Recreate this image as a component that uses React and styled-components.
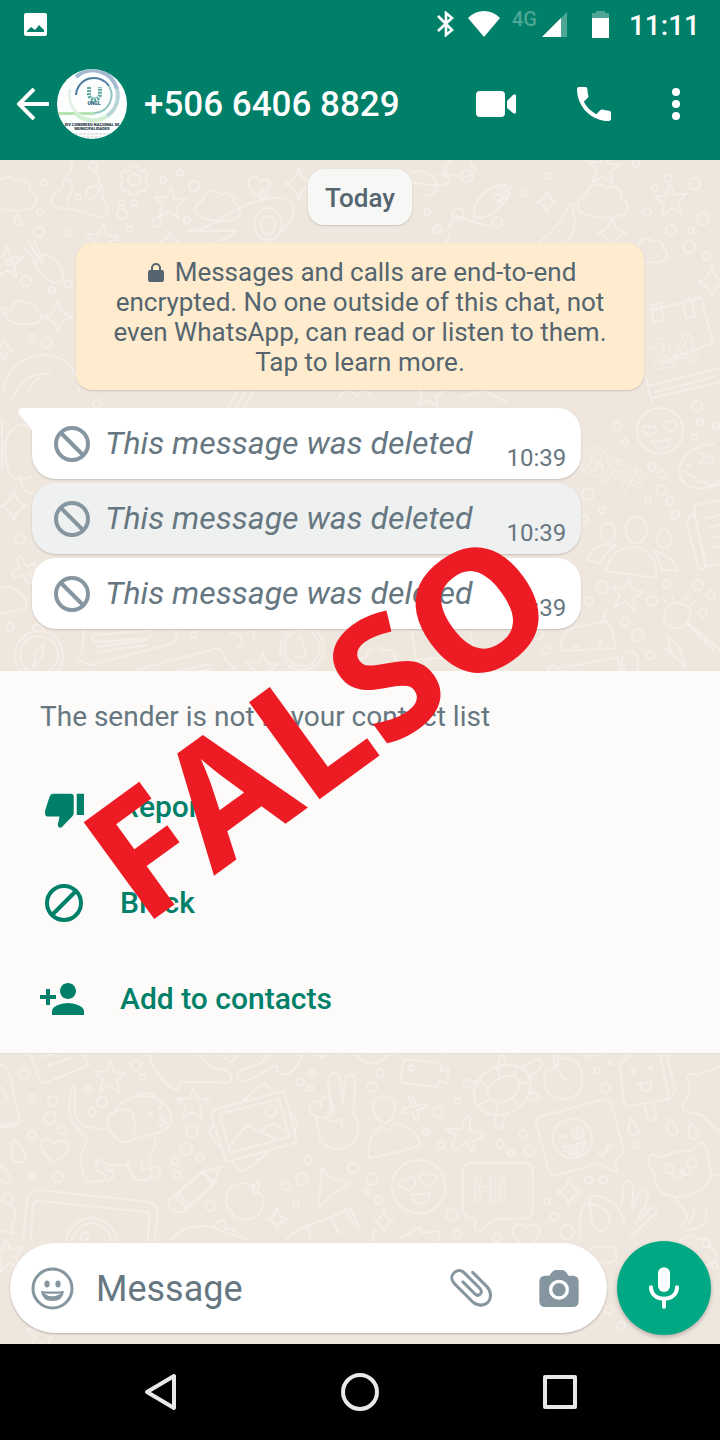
import React from 'react'
import styled, { createGlobalStyle } from 'styled-components'

const GlobalStyle = createGlobalStyle`
    * {
        box-sizing: border-box;
    }
    body {
        margin: 0;
        background-color: #000000;
        font-family: Roboto, "Liberation Sans", sans-serif;
    }
    button {
        padding: 0;
        border: none;
        background: none;
        color: inherit;
        font: inherit;
        cursor: pointer;
    }
`

const Screen = styled.div`
    position: relative;
    display: flex;
    flex-direction: column;
    min-height: 100vh;
    overflow: hidden;
`

const Icon = styled.svg`
    display: block;
    flex: none;
    width: ${props => props.$w}px;
    height: ${props => props.$h || props.$w}px;
    fill: ${props => props.$line ? 'none' : 'currentColor'};
    stroke: ${props => props.$line ? 'currentColor' : 'none'};
    stroke-width: ${props => props.$line || 0};
`

/* ---------- top ---------- */

const Header = styled.header`
    background-color: #008069;
    color: #ffffff;
`

const StatusBar = styled.div`
    display: flex;
    align-items: center;
    height: 48px;
    padding: 0 20px 0 24px;
`

const StatusIcons = styled.div`
    display: flex;
    align-items: center;
    margin-left: auto;
`

const Network = styled.div`
    display: flex;
    gap: 5px;
    margin: 0 25px 0 12px;
`

const NetworkType = styled.span`
    font-size: 20px;
    line-height: 16px;
    font-weight: 500;
    color: #4da696;
`

const Clock = styled.span`
    margin-left: 20px;
    padding-top: 3px;
    font-size: 28px;
    line-height: 32px;
    font-weight: 500;
`

const ChatBar = styled.div`
    display: flex;
    align-items: center;
    height: 112px;
    padding: 0 40px 0 17px;
`

const BackButton = styled.button`
    display: flex;
    align-items: center;
    gap: 8px;
`

const Contact = styled.h1`
    flex: 1;
    margin: 0 0 0 17px;
    padding-top: 2px;
    font-size: 35px;
    line-height: 44px;
    font-weight: 500;
    white-space: nowrap;
`

const ChatActions = styled.div`
    display: flex;
    align-items: center;
    gap: 61px;
`

/* ---------- chat ---------- */

const Chat = styled.main`
    position: relative;
    display: flex;
    flex: 1;
    flex-direction: column;
    background-color: #efe7de;
`

const Wallpaper = styled.svg`
    position: absolute;
    top: 0;
    left: 0;
    width: 100%;
    height: 100%;
    fill: none;
    stroke: #f5eee8;
    stroke-width: 2;
    stroke-linejoin: round;
    stroke-linecap: round;
    path, circle, rect, ellipse {
        vector-effect: non-scaling-stroke;
    }
`

const Conversation = styled.div`
    position: relative;
    display: flex;
    flex-direction: column;
    align-items: center;
    padding: 9px 0 42px;
`

const DayChip = styled.div`
    padding: 13px 17px 11px;
    border-radius: 16px;
    background-color: #f7f7f6;
    box-shadow: 0 1px 2px rgba(0, 0, 0, 0.15);
    color: #54656f;
    font-size: 26px;
    line-height: 32px;
    font-weight: 500;
`

const Notice = styled.p`
    width: calc(100% - 152px);
    margin: 18px 0;
    padding: 14px 32px 13px;
    border-radius: 16px;
    background-color: #ffecce;
    box-shadow: 0 1px 2px rgba(0, 0, 0, 0.15);
    color: #54656f;
    font-size: 26px;
    line-height: 30px;
    text-align: center;
`

const LockIcon = styled(Icon)`
    display: inline-block;
    margin: 0 11px 0 4px;
    vertical-align: -1px;
`

const Messages = styled.ul`
    display: flex;
    flex-direction: column;
    align-self: flex-start;
    gap: 4px;
    margin: 0;
    padding: 0 0 0 32px;
    list-style: none;
`

const Bubble = styled.li`
    position: relative;
    display: flex;
    align-items: center;
    height: 71px;
    padding: 0 15px 0 22px;
    border-radius: ${props => props.$tail ? '0 24px 24px 24px' : '24px'};
    background-color: ${props => props.$pressed ? '#eff1f1' : '#ffffff'};
    box-shadow: 0 1px 2px rgba(0, 0, 0, 0.18);
    color: #8696a0;
`

const Tail = styled(Icon)`
    position: absolute;
    top: 0;
    left: -14px;
    color: #ffffff;
`

const Deleted = styled.em`
    margin: 0 34px 0 15px;
    padding-bottom: 2px;
    color: #667781;
    font-size: 32px;
    line-height: 40px;
    white-space: nowrap;
`

const Time = styled.time`
    align-self: flex-end;
    padding-bottom: 7px;
    color: #667781;
    font-size: 24px;
    line-height: 28px;
`

const SenderPanel = styled.section`
    position: relative;
    padding: 30px 40px 6px;
    border-bottom: 1px solid #dfe1e1;
    background-color: rgba(255, 255, 255, 0.82);
`

const SenderNote = styled.p`
    margin: 0 0 26px;
    color: #667781;
    font-size: 28px;
    line-height: 32px;
`

const SenderAction = styled.button`
    display: flex;
    align-items: center;
    width: 100%;
    height: 96px;
    color: #008069;
    font-size: 30px;
    line-height: 36px;
    font-weight: 500;
`

const ActionIcon = styled.span`
    display: flex;
    justify-content: flex-end;
    width: 44px;
    margin-right: 36px;
`

/* ---------- bottom ---------- */

const Composer = styled.form`
    position: relative;
    display: flex;
    align-items: center;
    gap: 10px;
    margin-top: auto;
    padding: 0 9px 9px 10px;
`

const InputBox = styled.div`
    display: flex;
    flex: 1;
    align-items: center;
    min-width: 0;
    height: 90px;
    padding: 0 28px 0 21px;
    border-radius: 45px;
    background-color: #ffffff;
    box-shadow: 0 1px 2px rgba(0, 0, 0, 0.25);
    color: #8696a0;
`

const MessageInput = styled.input`
    flex: 1;
    min-width: 0;
    margin: 0 22px;
    padding: 2px 0 0;
    border: none;
    outline: none;
    background: none;
    color: #111b21;
    font-family: inherit;
    font-size: 36px;
    line-height: 44px;
    &::placeholder {
        color: #667781;
        opacity: 1;
    }
`

const InputActions = styled.div`
    display: flex;
    align-items: center;
    gap: 47px;
`

const MicButton = styled.button`
    display: flex;
    flex: none;
    align-items: center;
    justify-content: center;
    width: 94px;
    height: 94px;
    border-radius: 50%;
    background-color: #00a884;
    box-shadow: 0 2px 4px rgba(0, 0, 0, 0.25);
    color: #ffffff;
`

const NavBar = styled.nav`
    display: flex;
    height: 96px;
    padding: 0 60px;
    background-color: #000000;
    color: #e8e8e8;
`

const NavButton = styled.button`
    display: flex;
    flex: 1;
    align-items: center;
    justify-content: center;
`

/* stamp laid over the whole conversation */
const Stamp = styled.div`
    position: absolute;
    top: 778px;
    left: 142px;
    color: #ed1c24;
    font-family: "Noto Sans", "Open Sans", sans-serif;
    font-size: 168px;
    line-height: 170px;
    font-weight: 700;
    font-kerning: normal;
    transform: rotate(-36deg);
    transform-origin: 0 150px;
    pointer-events: none;
`

/* x, y, radius */
const bubbles = [
    [44, 183, 3], [78, 197, 3], [93, 166, 4], [121, 203, 3], [180, 173, 3], [194, 186, 5], [163, 180, 3], [263, 194, 4],
    [157, 222, 5], [122, 214, 5], [40, 212, 3], [39, 232, 5], [69, 233, 3], [130, 229, 3], [187, 220, 3], [134, 203, 3],
    [467, 176, 6], [498, 198, 4], [458, 214, 6], [437, 229, 4], [497, 222, 5], [427, 212, 3], [525, 193, 3], [547, 176, 3],
    [636, 163, 4], [655, 188, 3], [668, 178, 4], [647, 212, 4], [694, 184, 6], [703, 219, 6], [671, 230, 5], [691, 230, 3],
    [689, 247, 6], [707, 256, 4], [9, 262, 3], [26, 281, 5], [52, 290, 3], [68, 284, 4], [47, 343, 5], [32, 338, 3],
    [5, 311, 3], [97, 404, 4], [697, 406, 5], [617, 426, 4], [700, 422, 3], [716, 426, 3], [625, 442, 3], [695, 437, 3],
    [652, 467, 4], [662, 474, 4], [661, 490, 5], [648, 501, 3], [670, 501, 4], [675, 515, 4], [588, 494, 6], [602, 510, 3],
    [584, 519, 4], [20, 539, 5], [10, 627, 4], [667, 584, 4], [698, 585, 5], [602, 587, 6], [652, 601, 5], [589, 601, 4],
    [711, 595, 4], [703, 613, 4], [625, 622, 4], [638, 635, 6], [650, 655, 4], [546, 650, 4], [538, 634, 5], [193, 635, 3],
    [24, 1074, 5], [136, 1065, 5], [143, 1077, 3], [32, 1098, 3], [53, 1101, 5], [50, 1118, 6], [88, 1089, 3], [102, 1102, 5],
    [92, 1112, 4], [62, 1130, 4], [32, 1135, 4], [32, 1176, 3], [58, 1177, 5], [192, 1131, 6], [186, 1149, 6], [175, 1161, 4],
    [200, 1157, 4], [177, 1175, 4], [211, 1206, 5], [300, 1082, 4], [312, 1073, 3], [310, 1088, 3], [308, 1160, 4], [302, 1179, 6],
    [286, 1186, 4], [296, 1203, 3], [353, 1168, 5], [380, 1073, 4], [372, 1087, 5], [458, 1101, 3], [438, 1112, 5], [426, 1132, 3],
    [441, 1145, 4], [523, 1134, 4], [500, 1144, 4], [511, 1153, 3], [529, 1151, 5], [605, 1088, 5], [597, 1070, 3], [611, 1063, 2],
    [635, 1145, 3], [589, 1180, 4], [603, 1180, 4], [547, 1202, 3], [554, 1217, 4], [372, 1179, 6], [368, 1191, 3], [379, 1200, 4],
    [452, 1215, 6], [457, 1234, 4], [567, 1232, 7], [609, 1310, 4], [621, 1326, 4], [706, 1243, 4], [715, 1266, 3], [497, 1238, 4],
    [382, 773, 4], [389, 786, 6], [427, 782, 4], [466, 773, 3], [565, 757, 5], [588, 761, 6], [605, 763, 3], [577, 738, 5],
    [652, 740, 5], [562, 721, 3], [469, 841, 5], [475, 822, 3], [627, 832, 5], [580, 840, 4], [686, 848, 3], [709, 880, 5],
    [413, 893, 5], [397, 899, 3], [392, 933, 3], [400, 953, 5], [475, 983, 3], [527, 962, 4], [638, 965, 6], [697, 967, 5],
    [629, 980, 3], [651, 979, 3], [633, 1013, 5], [675, 1037, 5], [444, 1044, 6], [517, 1047, 4], [10, 840, 6], [35, 850, 3],
    [155, 975, 4], [88, 1029, 4], [277, 919, 5], [268, 950, 3], [297, 888, 5], [354, 940, 5]
]

/* x, y, scale, turn */
const stars = [
    [170, 203, 1, 5], [671, 200, 1, -5], [604, 168, 1, 5], [7, 262, 1, 0], [102, 240, 1, 5], [627, 594, 1, 10],
    [110, 1077, 1, 2], [193, 1104, 1, 2], [8, 1255, 1, -10], [532, 761, 1, 0], [95, 752, 1, 0], [262, 668, 1, 4],
    [430, 392, 1, 9], [42, 1335, 1, 5]
]

const sparkles = [
    [14, 506, 1], [299, 184, 1], [547, 202, 0.7], [612, 233, 1], [712, 282, 1], [58, 317, 1], [170, 242, 0.7],
    [277, 1219, 0.7], [569, 1192, 0.9], [384, 1221, 0.7], [686, 740, 1], [446, 810, 1], [604, 1020, 1], [4, 350, 0.7]
]

const hearts = [
    [258, 187, 0.8, 15], [54, 1151, 1, 5], [526, 1236, 1, 0], [372, 890, 0.8, -15], [590, 1048, 0.9, 10]
]

const drops = [
    [18, 1151, 1], [4, 1174, 0.8], [633, 1127, 0.7], [672, 1127, 0.7], [693, 1131, 0.7], [18, 220, 0.5]
]

const clouds = [
    [12, 193, 1, 0], [218, 205, 0.9, 0], [603, 200, 1, 0], [650, 250, 0.7, 0], [24, 312, 0.7, 0], [460, 166, 0.6, 0],
    [380, 660, 0.8, 0], [90, 690, 0.9, 0], [694, 1250, 0.9, 0]
]

function Doodles() {
    return (
        <Wallpaper viewBox="0 160 720 1184" preserveAspectRatio="xMidYMin slice" aria-hidden="true">
            {bubbles.map(([x, y, r], i) => <circle key={i} cx={x} cy={y} r={r} />)}
            {stars.map(([x, y, s, turn], i) => (
                <path key={i} transform={`translate(${x} ${y}) scale(${s}) rotate(${turn})`}
                    d="M0-16L4-5 16-5 7 3 10 15 0 8-10 15-7 3-16-5-4-5Z" />
            ))}
            {sparkles.map(([x, y, s], i) => (
                <path key={i} transform={`translate(${x} ${y}) scale(${s})`}
                    d="M0-16Q2-3 14 0Q2 3 0 15Q-3 3-14 0Q-3-3 0-16Z" />
            ))}
            {hearts.map(([x, y, s, turn], i) => (
                <path key={i} transform={`translate(${x} ${y}) scale(${s}) rotate(${turn})`}
                    d="M0 12C-8 5-15 0-13-7C-11-14-3-13 0-7C4-13 12-13 14-6C15 1 7 6 0 12Z" />
            ))}
            {drops.map(([x, y, s], i) => (
                <path key={i} transform={`translate(${x} ${y}) scale(${s})`}
                    d="M-4-12C2-6 8 1 8 6C7 13-3 13-6 7C-8 1-5-5-4-12Z" />
            ))}
            {clouds.map(([x, y, s], i) => (
                <path key={i} transform={`translate(${x} ${y}) scale(${s})`}
                    d="M-18 14C-30 10-26-3-17-4C-17-16-1-19 4-11C10-16 20-11 18-2C28 2 26 13 17 16C6 19-8 18-18 14Z" />
            ))}

            {/* gear, pile, avocado, planet */}
            <path d="M131 166h6l2 5 5-1 4 6-3 5 3 4-3 6-6-1-2 5h-7l-2-5-5 1-3-6 3-5-3-5 4-5 5 1zM134 174a6 6 0 1 0 .1 0" />
            <path d="M72 160c-2 6 2 8-3 13-6 5-5 13-9 17-8 4-12 12-6 16 8 5 16 1 25 5 10 3 26 10 28 3 4-9-4-13-5-17 5-6-1-12-4-15 2-7-2-10-5-12M66 179c6 2 8 8 5 13s-4 6-2 10M94 186c-6 0-10 6-7 11s11 0 12-5-1-7-5-6" />
            <path d="M189 231c19-1 36-17 57-26 24-9 43-11 47 1 4 17-17 34-37 41M188 231h48c-5 8-15 7-22 13M268 208a14 16 0 1 0 .1 0M268 216a7 9 0 1 0 .1 0" />
            <path d="M410 174c8-6 24-1 26 8s-3 14-12 14M412 182c15 4 38 5 38-2 0-4-7-6-13-6" />
            {/* carrot, banana, radish */}
            <path d="M474 214c-2-9 8-22 21-28 10-4 17 3 12 12-8 13-28 27-33 16M498 190l8-6M500 195l12-8M500 200l10-6" />
            <path d="M538 243c14-11 25-23 30-36l3-3 3 1-1 7c5 12-1 24-9 35" />
            <path d="M27 240l15 23M34 241l9 19M24 247l12 16M40 256c9-5 24 9 23 22-2 8-12 5-21-3-8-8-9-15-2-19" />
            {/* flower face and calendar on the right */}
            <path d="M650 310l44-10 7-3 12 46-48 18M652 305l9-2 2 17-10 2zM683 301l8-2 4 17-9 2z" />
            <path d="M647 386l73-18M652 398l68-16M646 378l6 24M655 392l60-15" />
            {/* bubble head at the left edge */}
            <path d="M4 392c0-22 20-38 42-37 20 1 33 17 33 36M12 400c5-16 20-29 38-26M28 392c3-10 8-13 12-14" />
            <path d="M447 230l9-14 32 10M444 248l6-15M340 398c2-9 14-9 17-1 4-8 14-7 14 0M460 398l24-8 22 12" />
            <path d="M5 452c-1-14 6-26 18-28l8 6M5 452c1 18 4 26 16 28l10-3M20 476c1 12 6 18 14 18M2 420v50M228 408l10-18M236 408l10-18M244 408l10-18" />
            {/* smiling face and doughnut */}
            <circle cx="660" cy="431" r="23" />
            <path d="M650 436c-9-4-9-10-4-10 2 0 3 1 3 2 2-3 7-3 7 1 0 3-2 5-6 7M671 431c-7-2-10-9-5-10 2 0 3 0 4 2 2-4 6-3 7 0s-2 6-6 8M652 441c7 1 13 0 18-2 0 12-15 13-18 2" />
            <path d="M680 475c-3-14 10-31 34-31M680 475c4 16 24 16 40 9M684 471c3 8 8 0 12 8s7-2 12 5 7-6 12-4M700 463c2-6 10-10 13-5s-5 7-13 5M686 465l5 1M700 452l3 2" />
            {/* people */}
            <path d="M608 523c-10 0-10 18 0 18s9-18 0-18M636 517c-14 0-14 26 0 26s15-26 0-26M664 530c-9 0-9 18 0 18s9-18 0-18M606 571c3-15 13-24 28-24 14 1 24 14 22 31zM587 560c3-11 13-19 28-15-8 8-12 11-14 18zM654 551c12 2 22 11 23 20l-16-2c-1-7-3-12-7-18" />
            {/* newspaper */}
            <path d="M720 500l-25 5-1 10 13 51 13-2M695 515c-5 0-9 5-8 10l11 41c1 5 9 4 7-1zM707 518l13-3M708 528l12-3M711 538l9-2M713 548l7-2" />
            {/* guitar, bolt, robot */}
            <path d="M665 617c-3-9 8-18 20-12 8 3 6 12 2 17l33 28M663 618c6 12 18 13 24 5l26 27M666 604l-2-5M674 602l-2-5M684 600l6-6M689 606l6-5" />
            <path d="M667 635l15 14-3-1 7 19-20-18 5 2zM563 651c-6-14 4-23 19-25l25-5c4 5 7 13 8 27zM570 627l-6-7M603 622l2-11 4-2M566 667l52-10 4 23M548 671c0-7 10-7 12 0M625 671c-7-14-1-22 10-18 5 5 3 13 3 18" />
            <circle cx="576" cy="648" r="2" />
            <circle cx="600" cy="643" r="2" />
            {/* cross, leaf, compass, letters, clock */}
            <path d="M20 556l7 11 8-4 2 5-8 5 4 9-5 2-5-9-9 2-2-4 8-6-4-8zM0 588c15-5 28 10 27 20L0 614" />
            <circle cx="39" cy="655" r="24" />
            <circle cx="39" cy="655" r="19" />
            <path d="M44 644l-9 8-1 15 8-10zM33 631c-4-8 11-10 10 0" />
            <path d="M84 630l-2 22-5 8 14 5 80-21c6-2 7-9 4-15M94 635l50-4c10-4 10 6 3 7l-50 4c-6-1-7-6-3-7M98 647l48-7M98 652l48-7M136 670l75-20c9-4 12 2 14 9l10 10M136 670l2 12M150 678l58-14M152 683l58-14" />
            <circle cx="302" cy="648" r="22" />
            <circle cx="302" cy="648" r="18" />
            <path d="M299 637c4-1 4 12 7 15s-6 6-11 6M230 634c8-3 13 2 12 9l-5 6M248 632l7-1-2 9" />
            <path d="M412 632l4 28 60-6-6-22M430 660l-18 12M470 656l12 10" />

            {/* band behind the sender panel */}
            <path d="M15 740l50-8 9 30-54 16zM16 742l29 17 24-25M0 790l12-5 6 14-5 12-13 3M12 845l12-16 10 25M45 830l14-5-6 20M5 890l80-4v60l-60 5-14-10zM20 914q-8 12 3 22" />
            <path d="M95 880l40-10 38 10 3 60c-10 30-60 35-72 5zM190 960c-10-30-8-60 20-65s37 10 41 66l-22 13zM200 930a13 13 0 1 0 26-4M16 980c12-20 20 2 26-10s15 5 22-6 14-3 14 12-20 22-40 22-22-8-22-18" />
            <circle cx="318" cy="880" r="21" />
            <path d="M312 950c-9-14-26 5-14 11-16 3-7 23 5 14-1 16 21 14 16-2 14 7 24-12 8-15 8-14-8-21-15-8" />
            <path d="M362 802h84l-4 72-80-5zM379 832a25 25 0 1 0 50 0a25 25 0 1 0-50 0M395 832a9 9 0 1 0 18 0a9 9 0 1 0-18 0" />
            <path d="M380 700c2 45 60 80 84 25M475 760l34 18-24 20zM510 810c-12-60 65-50 70-5 5 30 10 50 16 60-35 20-20 90 40 38M518 824l52-16c6 30-24 35-25 8-2 30-22 27-27 8" />
            <path d="M488 862c-40-20-50 50-28 58 20 12 40 0 55-20M576 805l45-32-30 55M588 818c30-5 42 40 16 56 25 25 37-20 36-36M495 920c-50 25-30 50 0 20 60-12 80 30 40 38" />
            <circle cx="640" cy="805" r="19" />
            <path d="M622 800q18-8 36 10M630 822q0-20 20-33M675 818l45-13M677 818c-20 40 5 40 43 8M665 860l42 8M630 735c4-12 22-12 18 4l-8 15zM675 715c2-30 20-30 30-8M656 690l10 15M660 880c-8 8 5 10 0 24l12-10c5-12 0-22-12-14" />
            <path d="M637 913l83-14M638 918l7 34 75-14M650 920v10a5 5 0 1 0 9-1v-8M672 919l12 7-11 7zM692 924l28-6" />
            <path d="M402 915l38-10 8 28-28 16-5-6zM414 921l20-6M416 928l20-6M408 985c10-16 35-28 40-15l18-11-8 25c-18 12-39 10-50 1" />
            <path d="M485 1019c2-10 6-20 20-21 15 0 28 5 30 24zM510 979c-9 0-9 13 0 17 11-2 10-18 0-17M564 975l44-10 7 36-41 9zM578 990a11 11 0 1 0 22-2a11 11 0 1 0-22 2M660 1007c8-15 5-28 22-28 12 2 8 20 11 40z" />
            <path d="M360 1002c45-4 64 8 58 30-6 18-35 23-58 18M372 1027a18 18 0 1 0 .1 0M546 1045c-8-32 18-25 10 0 12-28 36-22 17 4" />
            <path d="M200 1050c-4-14 5-24 18-22 12-5 24 3 24 18M342 1054c-8-14 6-22 18-22M150 690l60-12 12 30-56 14zM340 940l-22 32 34 26" />
            <path d="M500 698l32 2 6 4-2 28-40-2zM515 711a8 8 0 1 0 .1 0M550 676l8 50 12-2-6-48M625 671l5 30 12-1M600 706l4 18 8-2-4-16" />

            {/* below the panel */}
            <g transform="translate(0 1050) scale(0.3333)">
                <path d="M90 10l30 80q4 10 16 8l115-45q14-5 12-16L250 10M132 22l50-20M148 48l62-25M148 52c-6-6-2-10 4-12M0 45c20 0 25 20 30 35l28 125q2 12-10 14l-48 6M0 235l55-12M0 110c20 12 24 40 14 47H0" />
                <path d="M455 12c-10 20 2 35 15 50 25 40 45 60 65 55 8-6 2-14 6-23 40 8 100-4 135 6 20 2 24-26 8-35-20-12-60 0-84-50M715 88c-10-15-1-26 15-30l45-15c18-8 25-20 35-35M715 88c20 16 50-5 75-22 18-11 28-18 42-17-6 14 12 28 30 22 18-5 36-30 48-60M670 18l20 20 22-20M950 12c12 14 20 14 30 2" />
                {/* dog */}
                <path d="M326 237c-45 0-85-4-98-35-8-30-2-65-2-90-8-10-20 25-18 70 2 40 30 60 52 85 2 14-20 52-19 66 2 20 10 40 18 56 12 10 60 8 58-10-4-12-16-16-28-16V330c12-4 18 8 30 12 18 6 40 5 62 4M342 186c16-30 50-48 88-48 45 0 74 28 84 58 2 34-18 45-50 54-20 8-42 14-64 18M340 190c-20 0-23 30-12 48 14 26 36 46 60 36 22-8 18-60 8-86-8-14-34-14-56 2M383 328c0 20 10 58 30 62 32 6 48-6 42-26-6-12-20-9-30-6v-28M466 260c4 34-12 48-18 68 2 12 4 20 6 26 24-8 34 14 20 28-8 6-20 4-32 0M315 350c0 14 10 10 18 10 18 12 4 32-14 32M410 133c20-12 60 0 64 17M478 202c2-8 18-6 18 0 0 8-6 12-10 10zM490 212v8c-6 10-12 8-14 4M492 220c4 0 6 0 10-2" />
                <circle cx="450" cy="194" r="5" />
                <circle cx="480" cy="173" r="4" />
                {/* photo stack */}
                <path d="M650 178l190-53q10-4 14 6l35 135q2 10-8 14l-192 54q-10 3-14-7L634 195q-2-12 16-17M658 192l178-45 32 113-178 48zM688 290l46-58q6-8 16-2l85 40M790 242c6-20 34-24 46-12l20 8M732 150l52-46q10-4 18 4l20 20M870 185l24 36-12 24M640 224l-12 22 28 42M696 336l24 25q10 6 20-2l65-53" />
                <circle cx="813" cy="184" r="16" />
                {/* hand */}
                <path d="M994 188l-10-90c-2-30 30-40 36-10l8 70 8-66c2-26 34-22 30 4l-6 96c20 22 20 60 0 84-30 34-90 22-100-10l-14-68M992 188c-18 28-60 14-63-10-3-26 30-30 36-16M964 172c-12-32 20-44 30-24l6 36c-20 12-40 30 8 29l18-6c-2 14 0 24 7 34" />
                {/* pencil, apple, kite, frame */}
                <path d="M508 450l98-84 55-16-20 54-90 80c-18 14-58-18-43-34M606 366c6 12 18 6 18 22 12-6 10 12 14 17M642 358l12 10M526 436c8 18 18 30 38 36M536 428c6 16 18 28 36 36M762 412c-28-22-86-14-84 40-2 20 18 28 22 44 26 22 74 14 84-16 16-32 8-54-20-50M762 430c-8-24 8-34 14-36 6 14-2 26-10 34M966 352c10 20 18 30 32 34l46 12c6 4-4 8-8 12-30 14-50 30-70 54-4 6-10 6-10 0z" />
                <path d="M70 570l10-112c2-28 20-40 38-38l325 35c26 4 32 20 30 38l-8 77M92 570l8-110q2-8 10-8l330 34q10 2 9 10l-6 74M198 570c8-34 34-66 76-66 44 2 70 30 76 66M216 570c8-28 28-50 60-50s56 24 56 50M245 570c-6-12 6-24 14-24 10 6 8 22-4 24M0 454c24-2 44 10 46 38 0 20-18 30-6 60l-40-12M515 568c34-44 110-50 148-24l80 24M640 530q12-20 34-20l4 30q18-10 36 12M860 568c40-50 120-50 190-96l30 60M920 530l12 34M994 505l24 48M1040 485l30 50" />
                <circle cx="24" cy="446" r="15" />
            </g>
            <g transform="translate(360 1050) scale(0.3333)">
                <path d="M145 28l90 10q10 3 9 26l22-6-4 44-26-12-1 12q-2 12-12 9l-92-12q-10-2-8-14l6-48q4-10 16-9" />
                <circle cx="154" cy="54" r="8" />
                <path d="M72 138c-28 0-42 30-28 54 16 32 40 34 54 8 14-32 6-60-26-62M64 230l24 14c10-6 8-16 12-24 40 4 76 30 80 62 0 6-4 8-8 9L34 324c-6 0-9-2-9-8 0-40 14-74 39-86" />
                <path d="M148 140c8-8 14 0 18 28l30-8c8 6 6 12-26 20 8 26 10 30 0 32-8-2-8-10-12-28-24 8-32 6-30-2 0-6 10-8 28-14-6-12-10-20-8-28M320 198c4-6 14 0 10 14v30c34 4 44 8 42 16-4 8-10 8-36 16l8 30c-6 8-14-6-26-30-24 22-32 34-44 22 4-16 10-28 14-44-26-8-34-16-26-18 12-2 30 6 40 4z" />
                {/* turtle */}
                <path d="M360 84c40-48 120-52 144-12 24 46-6 96-60 118-50 16-96-8-102-46-4-26 4-44 18-60M400 100c28-28 68-28 74-8 8 32-8 50-36 62-28 10-52 0-56-20-2-16 6-24 18-34M362 92l22 20M348 168l36-16M406 196l8-36M480 170l-24-24M510 98l-36 2M468 52l-8 28M412 56l8 28M420 48c-8-22 2-34 8-32 10 8 10 24 10 30M482 56l42-26c20-8 24 12 20 22l-38 32M502 126l28 4c14 12 6 22-8 20l-24-6M406 198v24c2 16 18 18 24 4l4-30M342 118l-30-12c-8-12 6-18 14-16l34 8" />
                {/* cherry, ice lolly */}
                <path d="M584 58c-40-8-40 50-14 74 28 24 84 16 94-20 12-54-12-92-48-88-26 4-30 20-22 36 6 14 14 24 26 30M580 12l4 44M592 12l4 36M780 40l10 108q4 18 20 20l102-18q16-4 12-20L900 10M806 12c-2 12-14 24-26 26M924 150c14-6 24-28 18-44L918 10M854 166l10 38c8 14 26 8 24-8l-8-36M812 54l16 8-12 10M876 46l-14 10 16 2M832 100q26 4 44-6M842 100c0 34 30 30 30 6v-10M1080 50l-60 22c-14 8-40-12-38 14 16 36-2 60-14 80-2 40 50 6 76 48 12 14 20 24 36 28" />
                {/* winking card */}
                <path d="M540 200l192-52q16-3 22 12l36 140q4 14-10 20-22 2-8 46-26-6-42-20-18-10-30-1l-110 30q-18 4-24-14L528 218q-2-14 12-18" />
                <circle cx="637" cy="265" r="59" />
                <circle cx="654" cy="249" r="17" />
                <circle cx="653" cy="249" r="5" />
                <path d="M598 268c6-14 16-12 24-8M608 290q40-2 68-18c-4 30-16 42-34 42-18-2-28-12-34-24M630 292l4 16M642 288l4 24M654 284l-2 24M714 306l14 12 16-34M734 310l26-30" />
                <circle cx="176" cy="410" r="80" />
                <path d="M148 422c-30-8-38-20-30-28 8-6 16-6 20 0 4-14 22-16 28-4 4 12-4 20-18 32M206 410c-20-10-34-28-24-36 8-6 18-4 20 4 6-8 20-6 28 2 4 12-12 22-24 30M154 434l56-4c-4 42-48 40-56 4" />
                <path d="M334 338h156q28 0 28 28v112q0 28-28 28h-84l-46 38q-12 6-14-6v-32q-36 0-38-30V366q0-28 26-28" />
                {/* cat, hands */}
                <path d="M904 324c-34-24-46-2-34 24 2 12 8 16 12 18 2 36 14 74 66 74 70-2 110-38 104-80-2-20-4-24-10-40 4-20-8-40-18-44-10 2-18 12-26 24-34 0-66 6-94 24M946 440c4 30 36 30 34 70-24 6-14 34 6 30 40-8 60-10 52-70M1000 486c10 20-12 18-12 36M940 376c10 12 22 16 28-8 8 10 20 10 24-4M958 362l14-4-6 12zM1056 376l24-4" />
                <circle cx="926" cy="356" r="14" />
                <circle cx="995" cy="338" r="14" />
                <path d="M660 560c-4-50 4-90 16-98 14-4 18 18 18 40 4 50 50 56 56 4-6-30-30-38-46-42-30-10-18-26-4-26 34-2 84 24 94 82M782 470c10-22 4-50 10-68 12-18 30-4 28 20l-4 60M820 470c8-26 16-46 32-52 16 4 14 20 8 36-6 26-24 40-32 68M842 506c12-14 24-30 40-34 14 6 10 14-8 30l-66 64" />
                <path d="M120 562l40-16v-10l20-2 4 14 56-4-4 26M40 570c-4-24 8-40 14-20M640 640l60-50h60c16 20 12 40-4 46l-60 4" />
            </g>

            <g stroke="#f5eee8" strokeWidth="1" fontFamily="Roboto, sans-serif" fontWeight="700">
                <text x="473" y="1202" fontSize="35">Hi</text>
                <text x="652" y="370" fontSize="42" transform="rotate(-10 652 370)">24</text>
                <text x="578" y="468" fontSize="38" transform="rotate(28 578 468)">BFF</text>
            </g>
        </Wallpaper>
    )
}

function Avatar() {
    return (
        <Icon $w={70} viewBox="0 0 70 70" role="img" aria-label="UNGL">
            <defs>
                <clipPath id="avatar"><circle cx="35" cy="35" r="35" /></clipPath>
            </defs>
            <g clipPath="url(#avatar)">
                <rect width="70" height="70" fill="#fdfefe" />
                <g fill="none">
                    <path d="M0 44.500H38" stroke="#b6e3b4" strokeWidth="3" />
                    <path d="M13 20A25 25 0 0 0 24 47" stroke="#e3f2e6" strokeWidth="3" />
                    <path d="M19 8A25 25 0 0 1 60 20" stroke="#a3b9cf" strokeWidth="4" />
                    <path d="M60 20A25 25 0 0 1 50 47" stroke="#b9d5d8" strokeWidth="4" />
                    <path d="M50 47A25 25 0 0 1 18 44" stroke="#d2efd4" strokeWidth="4" />
                    <path d="M19 26A18 18 0 0 1 52 17" stroke="#4d7c9c" strokeWidth="2" />
                    <path d="M52 17A18 18 0 0 1 38 44" stroke="#8fc4bd" strokeWidth="2" />
                    <path d="M32 18V25a5 5 0 0 0 11 0V18" stroke="#5fa9a2" strokeWidth="4" strokeDasharray="2 1" />
                </g>
                <g fill="#20333f" fontFamily="Roboto, sans-serif" fontWeight="900" textAnchor="middle">
                    <text x="37" y="36" fontSize="5" fill="#1c6076">UNGL</text>
                    <text x="35" y="57" fontSize="4">XIV CONGRESO NACIONAL DE</text>
                    <text x="35" y="61" fontSize="4">MUNICIPALIDADES</text>
                </g>
                <path d="M18 65H54M26 68H44" stroke="#c9cdd0" strokeWidth="1" strokeDasharray="3 1" />
            </g>
        </Icon>
    )
}

function TopBar() {
    return (
        <Header>
            <StatusBar>
                <Icon $w={23} viewBox="0 0 23 23">
                    <path fillRule="evenodd" d="M2 0H21Q23 0 23 2V21Q23 23 21 23H2Q0 23 0 21V2Q0 0 2 0ZM3 19H20V17L15 12 11 17 7 14 3 18Z" />
                </Icon>
                <StatusIcons>
                    <Icon $w={17} $h={26} $line={2.6} viewBox="0 0 17 26">
                        <path d="M1 5L15 19 9 24V2L15 7 1 20" />
                    </Icon>
                    <Icon $w={46} $h={26} viewBox="-14 0 46 26">
                        <path d="M16 26L0 7Q7 0 16 0T32 7Z" />
                    </Icon>
                    <Network>
                        <NetworkType>4G</NetworkType>
                        <Icon $w={25} $h={26} viewBox="0 0 25 26">
                            <path d="M25 1V26H0Z" opacity="0.3" />
                            <path d="M19 7V26H0Z" />
                        </Icon>
                    </Network>
                    <Icon $w={17} $h={27} viewBox="0 0 17 27">
                        <path d="M0 2H4V0H13V2H17V7H0Z" opacity="0.3" />
                        <path d="M0 7H17V27H0Z" />
                    </Icon>
                    <Clock>11:11</Clock>
                </StatusIcons>
            </StatusBar>
            <ChatBar>
                <BackButton type="button" aria-label="Back">
                    <Icon $w={32} $line={4} viewBox="0 0 32 32">
                        <path d="M32 16H3M17 1L2 16 17 31" />
                    </Icon>
                    <Avatar />
                </BackButton>
                <Contact>+506 6406 8829</Contact>
                <ChatActions>
                    <button type="button" aria-label="Video call">
                        <Icon $w={40} $h={26} viewBox="0 0 40 26">
                            <rect width="29" height="26" rx="4" />
                            <path d="M31 10L37 4Q40 2 40 5V21Q40 24 37 22L31 17Z" />
                        </Icon>
                    </button>
                    <button type="button" aria-label="Voice call">
                        <Icon $w={34} viewBox="3 3 18 18">
                            <path d="M6.620 10.790c1.440 2.830 3.760 5.140 6.590 6.590l2.200-2.200c.27-.27.67-.36 1.020-.24 1.120.37 2.330.57 3.570.57.55 0 1 .45 1 1V20c0 .55-.45 1-1 1-9.390 0-17-7.610-17-17 0-.55.45-1 1-1h3.500c.55 0 1 .45 1 1 0 1.250.2 2.450.57 3.570.11.35.03.74-.25 1.020l-2.200 2.200z" />
                        </Icon>
                    </button>
                    <button type="button" aria-label="More options">
                        <Icon $w={8} $h={32} viewBox="0 0 8 32">
                            <circle cx="4" cy="4" r="4" />
                            <circle cx="4" cy="16" r="4" />
                            <circle cx="4" cy="28" r="4" />
                        </Icon>
                    </button>
                </ChatActions>
            </ChatBar>
        </Header>
    )
}

const messages = [
    { id: 1, time: '10:39' },
    { id: 2, time: '10:39', pressed: true },
    { id: 3, time: '10:39' }
]

function Message({ time, pressed, tail }) {
    return (
        <Bubble $pressed={pressed} $tail={tail}>
            {tail && (
                <Tail $w={15} $h={24} viewBox="0 0 15 24">
                    <path d="M15 0H3Q-1 1 1 6L15 23Z" />
                </Tail>
            )}
            <Icon $w={36} $line={4} viewBox="0 0 36 36">
                <circle cx="18" cy="18" r="16" />
                <path d="M7 7L29 29" />
            </Icon>
            <Deleted>This message was deleted</Deleted>
            <Time>{time}</Time>
        </Bubble>
    )
}

function UnknownSender() {
    return (
        <SenderPanel>
            <SenderNote>The sender is not in your contact list</SenderNote>
            <SenderAction type="button">
                <ActionIcon>
                    <Icon $w={39} $h={44} viewBox="0 -26 118 132">
                        <path d="M24 0H78Q87 0 87 9V58Q87 64 83 68L52 100Q46 106 40 99 38 96 39 92L44 69H10Q0 69 0 58 0 50 2 45L14 8Q17 0 24 0ZM96 0H118V64H96Z" />
                    </Icon>
                </ActionIcon>
                Report
            </SenderAction>
            <SenderAction type="button">
                <ActionIcon>
                    <Icon $w={39} $line={4} viewBox="0 0 39 39">
                        <circle cx="19" cy="19" r="17" />
                        <path d="M7 31L31 7" />
                    </Icon>
                </ActionIcon>
                Block
            </SenderAction>
            <SenderAction type="button">
                <ActionIcon>
                    <Icon $w={44} $h={32} viewBox="1 4 22 16">
                        <path d="M15 12c2.210 0 4-1.790 4-4s-1.790-4-4-4-4 1.790-4 4 1.790 4 4 4zm-9-2V7H4v3H1v2h3v3h2v-3h3v-2H6zm9 4c-2.670 0-8 1.340-8 4v2h16v-2c0-2.660-5.330-4-8-4z" />
                    </Icon>
                </ActionIcon>
                Add to contacts
            </SenderAction>
        </SenderPanel>
    )
}

function MessageBar() {
    return (
        <Composer onSubmit={e => e.preventDefault()}>
            <InputBox>
                <button type="button" aria-label="Emoji">
                    <Icon $w={43} viewBox="0 0 43 43">
                        <circle cx="21.500" cy="21.500" r="19.500" fill="none" stroke="currentColor" strokeWidth="3" />
                        <ellipse cx="16" cy="17" rx="2.600" ry="3.600" />
                        <ellipse cx="27" cy="17" rx="2.600" ry="3.600" />
                        <path fillRule="evenodd" d="M10 24Q21 25 33 24Q32 34 21.500 34T10 24ZM13 26.500Q21 32 30 26.500Q21 27 13 26.500Z" />
                    </Icon>
                </button>
                <MessageInput type="text" aria-label="Message" placeholder="Message" />
                <InputActions>
                    <button type="button" aria-label="Attach">
                        <Icon $w={42} $h={38} $line={9} viewBox="0 0 124 112" strokeLinecap="round">
                            <path d="M67 10L109 52C122 66 123 86 112 98 100 110 80 109 68 98L13 43C3 33 3 20 12 11 21 2 34 3 43 12L87 56C94 63 94 70 89 74 84 79 78 78 73 73L38 38" />
                        </Icon>
                    </button>
                    <button type="button" aria-label="Camera">
                        <Icon $w={40} $h={37} viewBox="0 0 118 111">
                            <path d="M18 17H30L38 6Q43 0 50 0H68Q75 0 80 6L88 17H100Q118 17 118 35V93Q118 111 100 111H18Q0 111 0 93V35Q0 17 18 17Z" />
                            <circle cx="59" cy="59" r="25" fill="none" stroke="#ffffff" strokeWidth="10" />
                        </Icon>
                    </button>
                </InputActions>
            </InputBox>
            <MicButton type="button" aria-label="Voice message">
                <Icon $w={30} $h={42} viewBox="0 0 90 124">
                    <rect x="27" y="0" width="36" height="74" rx="18" />
                    <path d="M6 60C6 106 84 106 84 60M45 96V118" fill="none" stroke="currentColor" strokeWidth="12" strokeLinecap="round" />
                </Icon>
            </MicButton>
        </Composer>
    )
}

function App() {
    return (
        <Screen>
            <GlobalStyle />
            <TopBar />
            <Chat>
                <Doodles />
                <Conversation>
                    <DayChip>Today</DayChip>
                    <Notice>
                        <LockIcon $w={16} $h={20} viewBox="0 0 16 20">
                            <path d="M3 8V6a5 5 0 0 1 10 0v2h1q2 0 2 2v8q0 2-2 2H2q-2 0-2-2V10q0-2 2-2ZM5 8H11V6a3 3 0 0 0-6 0Z" fillRule="evenodd" />
                        </LockIcon>
                        Messages and calls are end-to-end encrypted. No one outside of this chat, not even WhatsApp, can read or listen to them. Tap to learn more.
                    </Notice>
                    <Messages>
                        {messages.map((message, i) => (
                            <Message key={message.id} time={message.time} pressed={message.pressed} tail={i === 0} />
                        ))}
                    </Messages>
                </Conversation>
                <UnknownSender />
                <MessageBar />
            </Chat>
            <NavBar>
                <NavButton type="button" aria-label="Back">
                    <Icon $w={32} $h={38} $line={4} viewBox="0 0 32 38" strokeLinejoin="round">
                        <path d="M30 3V35L3 19Z" />
                    </Icon>
                </NavButton>
                <NavButton type="button" aria-label="Home">
                    <Icon $w={38} $line={4} viewBox="0 0 38 38">
                        <circle cx="19" cy="19" r="17" />
                    </Icon>
                </NavButton>
                <NavButton type="button" aria-label="Recent apps">
                    <Icon $w={34} $line={4} viewBox="0 0 34 34" strokeLinejoin="round">
                        <path d="M2 2H32V32H2Z" />
                    </Icon>
                </NavButton>
            </NavBar>
            <Stamp>FALSO</Stamp>
        </Screen>
    )
}

export default App
